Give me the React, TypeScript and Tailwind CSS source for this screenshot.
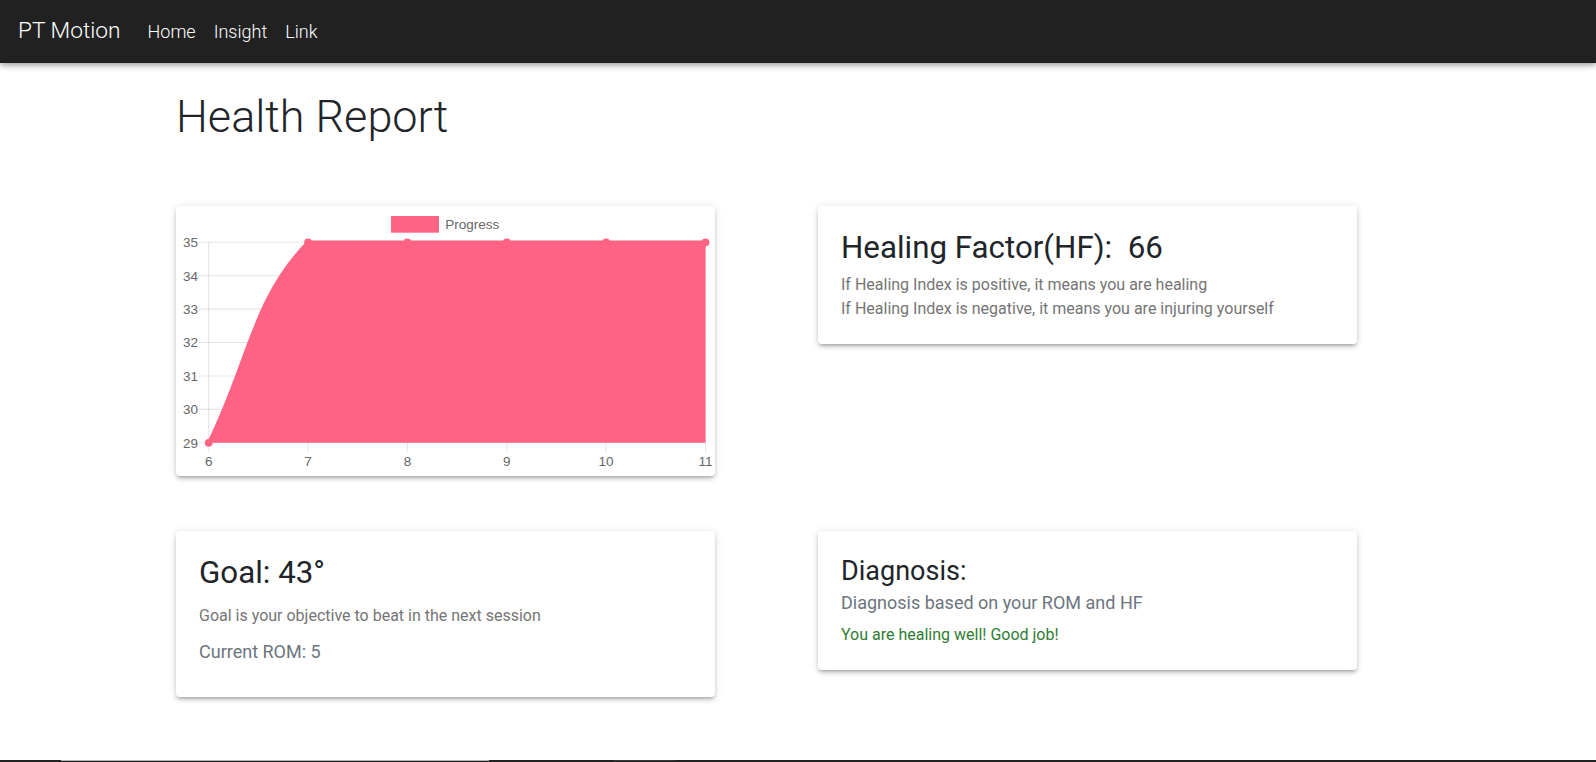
import React from "react";

const cardShadow =
  "shadow-[0_3px_3px_-2px_rgba(0,0,0,0.2),0_3px_4px_0_rgba(0,0,0,0.14),0_1px_8px_0_rgba(0,0,0,0.12)]";

function ProgressChart() {
  const xs = [32.7, 132.1, 231.4, 330.8, 430.1, 529.5];
  const labels = [6, 7, 8, 9, 10, 11];
  const data = [29, 35, 35, 35, 35, 35];
  const ticks = [35, 34, 33, 32, 31, 30, 29];
  const yOf = (v: number) => 36.3 + (35 - v) * 33.42;
  const pink = "#ff6384";
  const grid = "rgba(0,0,0,0.1)";

  const curve = "M32.7 236.8 C72.5 156.6 77.1 91.8 132.1 36.3 L529.5 36.3";

  return (
    <svg width="539" height="270" viewBox="0 0 539 270" className="block">
      {/* legend */}
      <rect x="215" y="10" width="48" height="16.7" fill={pink} />
      <text x="269.3" y="22.8" fontSize="13.5" fill="#666" fontFamily="'Liberation Sans', Arial, sans-serif">
        Progress
      </text>

      {/* grid */}
      {ticks.map((t) => (
        <line key={t} x1="23" x2="529.5" y1={yOf(t)} y2={yOf(t)} stroke={grid} strokeWidth="1.1" />
      ))}
      {xs.map((x, i) => (
        <line key={i} x1={x} x2={x} y1="36.3" y2="246" stroke={grid} strokeWidth="1.1" />
      ))}

      {/* area */}
      <path d={curve + " L529.5 236.8 Z"} fill={pink} />
      <path d={curve} fill="none" stroke={pink} strokeWidth="3.4" />
      {xs.map((x, i) => (
        <circle key={i} cx={x} cy={yOf(data[i])} r="3.9" fill={pink} />
      ))}

      {/* labels */}
      {ticks.map((t) => (
        <text
          key={t}
          x="22"
          y={yOf(t) + 4.9}
          textAnchor="end"
          fontSize="13.5"
          fill="#666"
          fontFamily="'Liberation Sans', Arial, sans-serif"
        >
          {t}
        </text>
      ))}
      {xs.map((x, i) => (
        <text
          key={i}
          x={x}
          y="260.3"
          textAnchor="middle"
          fontSize="13.5"
          fill="#666"
          fontFamily="'Liberation Sans', Arial, sans-serif"
        >
          {labels[i]}
        </text>
      ))}
    </svg>
  );
}

export default function App() {
  return (
    <div className="min-h-screen bg-white font-['Roboto','Liberation_Sans',sans-serif] text-[#212529]">
      {/* Navbar */}
      <nav className="relative z-10 flex h-[63px] items-center bg-[#212121] pl-[18px] text-white shadow-[0_2px_4px_-1px_rgba(0,0,0,0.2),0_4px_5px_0_rgba(0,0,0,0.14),0_1px_10px_0_rgba(0,0,0,0.12)]">
        <span className="mr-[18px] text-[22.7px] font-light">PT Motion</span>
        <a className="px-[9px] text-[18px] font-light">Home</a>
        <a className="px-[9px] text-[18px] font-light">Insight</a>
        <a className="px-[9px] text-[18px] font-light">Link</a>
      </nav>

      {/* Content */}
      <main className="pl-[176px] pt-[27px] pb-[63px]">
        <h1 className="text-[45px] font-light leading-[54px]">Health Report</h1>

        <div className="mt-[62px] grid grid-cols-[539px_539px] items-start gap-x-[103px] gap-y-[55px]">
          {/* Chart */}
          <div className={`h-[270px] overflow-hidden rounded-[4px] bg-white ${cardShadow}`}>
            <ProgressChart />
          </div>

          {/* Healing factor */}
          <div className={`rounded-[4px] bg-white p-[23px] ${cardShadow}`}>
            <h2 className="mb-[6px] text-[31.3px] leading-[38.4px]">{"Healing Factor(HF):\u00a0 66"}</h2>
            <p className="text-[16px] leading-6 text-[#757575]">
              If Healing Index is positive, it means you are healing
            </p>
            <p className="text-[16px] leading-6 text-[#757575]">
              If Healing Index is negative, it means you are injuring yourself
            </p>
          </div>

          {/* Goal */}
          <div className={`rounded-[4px] bg-white p-[23px] ${cardShadow}`}>
            <h2 className="mb-3 text-[31.3px] leading-[38.4px]">Goal: 43°</h2>
            <p className="mb-[10px] text-[16px] leading-6 text-[#757575]">
              Goal is your objective to beat in the next session
            </p>
            <p className="mb-[9px] text-[18px] leading-[27px] text-[#6c757d]">Current ROM: 5</p>
          </div>

          {/* Diagnosis */}
          <div className={`rounded-[4px] bg-white p-[23px] ${cardShadow}`}>
            <h3 className="mt-[1px] mb-[2px] text-[27px] leading-[32.4px]">Diagnosis:</h3>
            <p className="mb-[7px] text-[18px] leading-[27px] text-[#6c757d]">
              Diagnosis based on your ROM and HF
            </p>
            <p className="text-[16px] leading-6 text-[#2e7d32]">You are healing well! Good job!</p>
          </div>
        </div>
      </main>

      {/* Footer edge */}
      <footer className="h-[48px] bg-[#212121]">
        <div className="flex h-px">
          <div className="w-[61px]" />
          <div className="w-[428px] bg-[#b4b4b4]" />
          <div className="w-[125px]" />
          <div className="w-[61px] bg-[#3a3a3a]" />
        </div>
      </footer>
    </div>
  );
}
